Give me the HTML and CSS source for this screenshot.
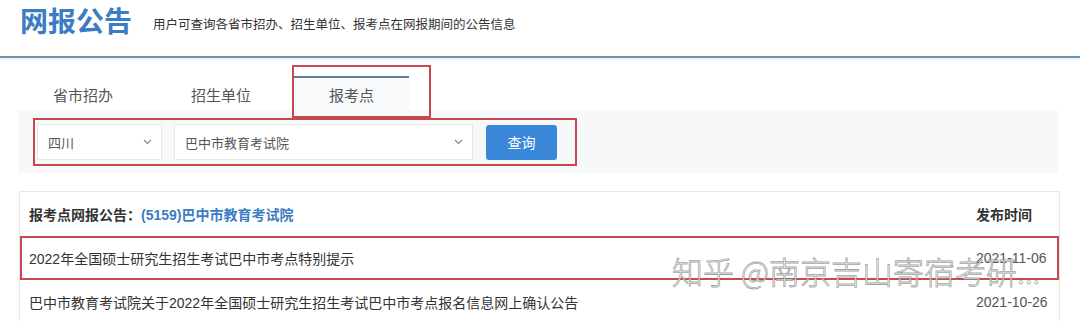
FILE: index.html
```html
<!DOCTYPE html>
<html lang="zh-CN">
<head>
<meta charset="utf-8">
<title>网报公告</title>
<link rel="stylesheet" href="styles.css">
</head>
<body>
<div class="page">
  <header class="top">
    <h1 class="title">网报公告</h1>
    <p class="subtitle">用户可查询各省市招办、招生单位、报考点在网报期间的公告信息</p>
  </header>

  <nav class="tabs">
    <div class="tab">省市招办</div>
    <div class="tab">招生单位</div>
    <div class="tab tab-active">报考点</div>
  </nav>

  <section class="filter-bar">
    <div class="filter-group">
      <div class="select select-prov">
        <span>四川</span>
        <svg class="chev" width="9" height="6" viewBox="0 0 9 6"><path d="M1 1l3.5 3.5L8 1" fill="none" stroke="#888" stroke-width="1.2"/></svg>
      </div>
      <div class="select select-org">
        <span>巴中市教育考试院</span>
        <svg class="chev" width="9" height="6" viewBox="0 0 9 6"><path d="M1 1l3.5 3.5L8 1" fill="none" stroke="#888" stroke-width="1.2"/></svg>
      </div>
      <button class="btn">查询</button>
    </div>
  </section>

  <section class="panel">
    <div class="row row-head">
      <div class="cell-title"><b>报考点网报公告：</b><b class="org">(5159)巴中市教育考试院</b></div>
      <div class="cell-date"><b>发布时间</b></div>
    </div>
    <div class="row row-marked">
      <div class="cell-title">2022年全国硕士研究生招生考试巴中市考点特别提示</div>
      <div class="cell-date">2021-11-06</div>
    </div>
    <div class="row">
      <div class="cell-title">巴中市教育考试院关于2022年全国硕士研究生招生考试巴中市考点报名信息网上确认公告</div>
      <div class="cell-date">2021-10-26</div>
    </div>
  </section>
</div>
<div class="watermark">知乎 @南京吉山寄宿考研...</div>
</body>
</html>
```

FILE: styles.css
```css
html, body {
  margin: 0;
  padding: 0;
  background: #fff;
  overflow: hidden;
}
body {
  width: 1080px;
  height: 321px;
  position: relative;
  font-family: "Liberation Sans", "Noto Sans CJK SC", sans-serif;
  color: #333;
}
.page {
  display: flex;
  flex-direction: column;
}
.top {
  height: 56px;
  display: flex;
  align-items: flex-start;
  padding-left: 20px;
  border-bottom: 2px solid #6f94b1;
  box-shadow: 0 1px 2px #d6e9f6;
}
.title {
  margin: 5px 0 0 0;
  font-size: 28px;
  line-height: 31px;
  font-weight: 700;
  color: #3c7cc3;
  font-family: "Noto Sans CJK SC", sans-serif;
}
.subtitle {
  margin: 18px 0 0 21px;
  font-size: 12.5px;
  line-height: 15px;
  color: #333;
}
.tabs {
  display: flex;
  gap: 8px;
  padding-left: 18px;
  margin-top: 18px;
}
.tab {
  position: relative;
  padding: 4px 35px 0;
  height: 28px;
  line-height: 28px;
  border-top: 2px solid transparent;
  font-size: 15px;
  color: #555;
}
.tab-active {
  border-top-color: #5d7d98;
  background: #f7f9fb;
}
.tab-active::after {
  content: "";
  position: absolute;
  left: -2px;
  top: -13px;
  right: -22px;
  bottom: -8px;
  border: 2px solid #c8484f;
}
.filter-bar {
  margin: 0 22px 0 18px;
  background: #f7f8fa;
  padding: 8px 15px 7px;
  display: flex;
}
.filter-group {
  display: flex;
  align-items: center;
  gap: 12px;
  padding: 4px 18px 4px 2px;
  border: 2px solid #c8484f;
}
.select {
  box-sizing: border-box;
  height: 36px;
  background: #fff;
  border: 1px solid #e6e6e6;
  display: flex;
  align-items: center;
  justify-content: space-between;
  padding: 0 9px 0 10px;
  font-size: 13px;
  color: #555;
}
.select-prov { width: 125px; }
.select-org { width: 299px; }
.btn {
  margin-left: 1px;
  width: 71px;
  height: 35px;
  border: none;
  border-radius: 3px;
  background: #3a87d9;
  color: #fff;
  font-size: 14px;
  font-family: "Noto Sans CJK SC", sans-serif;
}
.panel {
  margin: 18px 20px 0 19px;
  border: 1px solid #e6e6e6;
  border-bottom: none;
}
.row {
  display: grid;
  grid-template-columns: 1fr 72px;
  align-items: center;
  height: 44px;
  padding: 0 11px 0 9px;
  font-size: 14px;
  color: #333;
}
.row-head b { font-weight: 700; color: #333; }
.row-head .org { color: #3c7cc3; }
.row-marked {
  outline: 2px solid #c8484f;
  outline-offset: -2px;
}
.cell-date {
  color: #555;
  white-space: nowrap;
}
.watermark {
  position: absolute;
  left: 672px;
  top: 251px;
  font-family: "Noto Sans CJK SC", sans-serif;
  font-weight: 300;
  font-size: 31px;
  line-height: 40px;
  color: rgba(255, 255, 255, 0.85);
  -webkit-text-stroke: 0.8px rgba(120, 120, 120, 0.7);
  white-space: nowrap;
}
```
